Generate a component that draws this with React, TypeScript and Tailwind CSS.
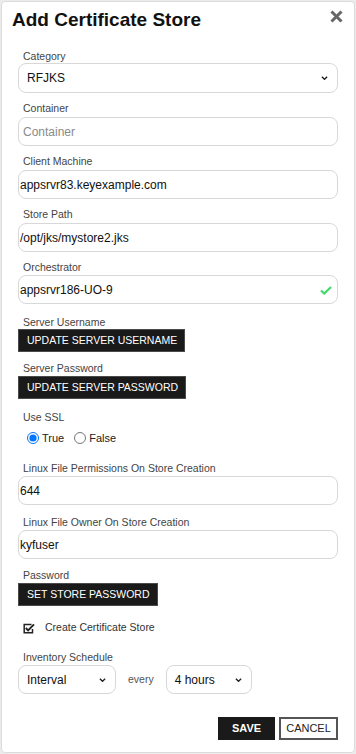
import React from "react";

const Chevron = () => (
  <svg width="7" height="5" viewBox="0 0 8 5" className="absolute right-[9px] top-1/2 -translate-y-1/2">
    <path d="M1 1l3 3 3-3" fill="none" stroke="#222" strokeWidth="1.5" />
  </svg>
);

const Label = ({ children }: { children: React.ReactNode }) => (
  <div className="pl-[5px] text-[10.5px] leading-[12px] h-[12px] text-[#444] whitespace-nowrap">{children}</div>
);

const Field = ({ label, value, placeholder, check, top = 3 }: { label: string; value?: string; placeholder?: string; check?: boolean; top?: number }) => (
  <div className="flex flex-col">
    <Label>{label}</Label>
    <div
      className={`relative h-[29px] w-[320px] rounded-[8px] border border-[#d8d8d8] bg-white flex items-center ${top === 2 ? "mt-[2px]" : "mt-[3px]"} ${value ? "pl-[1px]" : "pl-[4px]"}`}
    >
      {value ? (
        <span className="text-[12px] text-[#111]">{value}</span>
      ) : (
        <span className="text-[12px] text-[#8a8a8a]">{placeholder}</span>
      )}
      {check && (
        <svg width="12" height="9" viewBox="0 0 12 9" className="absolute right-[5px] top-[10px]">
          <path d="M1 4.5l3.2 3L11 1" fill="none" stroke="#3ddc6a" strokeWidth="2.2" />
        </svg>
      )}
    </div>
  </div>
);

const BlackButton = ({ label, children, gap = 1 }: { label: string; children: string; gap?: number }) => (
  <div className="flex flex-col">
    <Label>{label}</Label>
    <div
      className={`self-start h-[23px] bg-[#1a1a1a] text-white text-[10.5px] flex items-center pl-[8px] pr-[7px] border border-[#4a4a4a] ${gap === 2 ? "mt-[2px]" : "mt-[1px]"}`}
    >
      {children}
    </div>
  </div>
);

export default function App() {
  return (
    <div
      className="w-[356px] h-[754px] bg-[#ececec] p-[1px]"
      style={{ fontFamily: '"Liberation Sans", Arial, sans-serif' }}
    >
      <div className="w-[354px] h-[752px] bg-white rounded-[4px] border border-[#dcdcdc] relative">
        <div className="flex items-start justify-between pl-[10px] pr-[11px] pt-[7px] h-[29px]">
          <div className="text-[19px] font-bold text-[#111] leading-[22px]">Add Certificate Store</div>
          <svg width="13" height="13" viewBox="0 0 13 13" className="mt-[1px]">
            <path d="M1.5 1.5l10 10M11.5 1.5l-10 10" stroke="#666" strokeWidth="3" />
          </svg>
        </div>
        <div className="pl-[16px] pt-[19px] flex flex-col">
          <div className="flex flex-col">
            <Label>Category</Label>
            <div className="relative mt-[1px] h-[30px] w-[320px] rounded-[8px] border border-[#d8d8d8] flex items-center pl-[8px]">
              <span className="text-[12px] text-[#111]">RFJKS</span>
              <Chevron />
            </div>
          </div>
          <div className="h-[9px]" />
          <Field label="Container" placeholder="Container" />
          <div className="h-[9px]" />
          <Field label="Client Machine" value="appsrvr83.keyexample.com" />
          <div className="h-[9px]" />
          <Field label="Store Path" value="/opt/jks/mystore2.jks" />
          <div className="h-[9px]" />
          <Field label="Orchestrator" value="appsrvr186-UO-9" check top={2} />
          <div className="h-[12px]" />
          <BlackButton label="Server Username">UPDATE SERVER USERNAME</BlackButton>
          <div className="h-[10px]" />
          <BlackButton label="Server Password" gap={2}>UPDATE SERVER PASSWORD</BlackButton>
          <div className="h-[12px]" />
          <Label>Use SSL</Label>
          <div className="flex items-center pl-[9px] mt-[8px] h-[14px] text-[11px] text-[#222]">
            <input type="radio" name="ssl" defaultChecked className="m-0 w-[12px] h-[12px]" />
            <span className="ml-[3px]">True</span>
            <input type="radio" name="ssl" className="m-0 ml-[10px] w-[12px] h-[12px]" />
            <span className="ml-[3px]">False</span>
          </div>
          <div className="h-[17px]" />
          <Field label="Linux File Permissions On Store Creation" value="644" top={2} />
          <div className="h-[11px]" />
          <Field label="Linux File Owner On Store Creation" value="kyfuser" top={2} />
          <div className="h-[10px]" />
          <BlackButton label="Password" gap={2}>SET STORE PASSWORD</BlackButton>
          <div className="h-[15px]" />
          <div className="flex items-center pl-[5px] h-[14px]">
            <svg width="12" height="11" viewBox="0 0 12 11">
              <path d="M8.5 1.5H1.2v8.3h8.3V6" fill="none" stroke="#222" strokeWidth="1.5" />
              <path d="M2.8 5l2.3 2.3L11 1.3" fill="none" stroke="#222" strokeWidth="1.9" />
            </svg>
            <span className="ml-[10px] text-[10.5px] text-[#333]">Create Certificate Store</span>
          </div>
          <div className="h-[16px]" />
          <Label>Inventory Schedule</Label>
          <div className="flex items-center mt-[2px]">
            <div className="relative h-[29px] w-[98px] rounded-[8px] border border-[#d8d8d8] flex items-center pl-[8px]">
              <span className="text-[12px] text-[#111]">Interval</span>
              <Chevron />
            </div>
            <span className="ml-[12px] text-[10.5px] text-[#555]">every</span>
            <div className="ml-[12px] relative h-[29px] w-[86px] rounded-[8px] border border-[#d8d8d8] flex items-center pl-[8px]">
              <span className="text-[12px] text-[#111]">4 hours</span>
              <Chevron />
            </div>
          </div>
          <div className="flex justify-end gap-[4px] pr-[16px] mt-[23px]">
            <div className="w-[57px] h-[23px] bg-[#1a1a1a] text-white text-[11px] font-bold flex items-center justify-center">SAVE</div>
            <div className="w-[59px] h-[23px] bg-white text-[#222] text-[11px] border-2 border-[#555] flex items-center justify-center">CANCEL</div>
          </div>
        </div>
      </div>
    </div>
  );
}
